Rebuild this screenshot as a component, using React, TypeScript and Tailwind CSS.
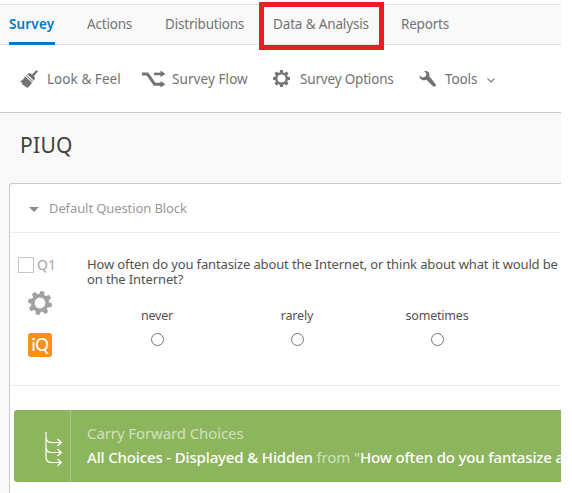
import React from "react";

const gearTeeth = [0, 45, 90, 135, 180, 225, 270, 315];

function Gear({ size, color, hole, turn = 0 }: { size: number; color: string; hole: number; turn?: number }) {
  return (
    <svg width={size} height={size} viewBox="-12 -12 24 24" className="shrink-0">
      <g transform={`rotate(${turn})`}>
        <circle r={(9 + hole) / 2} fill="none" stroke={color} strokeWidth={9 - hole} />
        {gearTeeth.map((a) => (
          <path key={a} d="M-2.7 -8 L-1.9 -12 H1.9 L2.7 -8 Z" fill={color} transform={`rotate(${a})`} />
        ))}
      </g>
    </svg>
  );
}

function Brush() {
  return (
    <svg width="18" height="18" viewBox="0 0 18 18" className="shrink-0" fill="#737373">
      <path d="M16.4 0 L17.9 1.4 L14 6 C15.4 7.8 15.2 9 13.9 10.5 L7 4 C8.8 2.6 10.3 3 12 4.4 Z" />
      <path d="M6.2 4.9 L13.1 11.3 L12.5 12 L5.6 5.6 Z" />
      <path d="M5 6.3 L12 12.8 C10.6 14.9 9.2 16.7 6.9 18 L5.8 16.4 L4.8 16.8 L4.1 15 L2.4 14.9 L2.2 12.9 L0 11.5 C2.7 10.5 3.9 8.6 5 6.3 Z" />
    </svg>
  );
}

function Flow() {
  return (
    <svg width="24" height="18" viewBox="0 0 24 18" className="shrink-0" fill="none" stroke="#737373" strokeWidth="2.6">
      <path d="M0 3.9 H5.4 L12.6 14.2 H20" strokeWidth="3" />
      <path d="M12 3.9 H20" />
      <path d="M18.5 0.6 L23.5 3.9 L18.5 7.1 Z M18.5 10.9 L23.5 14.2 L18.5 17.5 Z" fill="#737373" stroke="none" />
    </svg>
  );
}

function Wrench() {
  return (
    <svg width="18" height="18" viewBox="0 0 18 18" className="shrink-0">
      <path
        d="M5.1 1.2 C8.6 0.1 11.2 2.8 10.4 6.4 L16.4 13.7 C17.8 15.6 15.7 17.6 14 16.2 L7.5 9.8 C4 11 0.3 9.4 0.6 5.4 L3.4 7.6 L6.8 6.4 L7.3 3.2 Z"
        fill="#737373"
      />
    </svg>
  );
}

function CarryForward() {
  return (
    <svg width="18" height="36" viewBox="0 0 18 36" fill="none" stroke="#fff" strokeWidth="1.2">
      <path d="M1 1 V26 Q1 31.5 6.5 31.5 H16 M1 6 Q1 11.5 6.5 11.5 H16 M1 16 Q1 21.5 6.5 21.5 H16" />
      <path d="M12.5 8 L16.3 11.5 L12.5 15 M12.5 18 L16.3 21.5 L12.5 25 M12.5 28 L16.3 31.5 L12.5 35" />
    </svg>
  );
}

function Choice({ label }: { label: string }) {
  return (
    <div className="flex w-[140px] shrink-0 flex-col items-center">
      <span className="text-[12.5px] leading-[18px] tracking-[-0.2px]">{label}</span>
      <span className="mt-[8px] h-[13px] w-[13px] rounded-full border border-[#767676] bg-white" />
    </div>
  );
}

export default function App() {
  return (
    <div className="h-[493px] w-[572px] overflow-hidden bg-white font-['Noto_Sans','Open_Sans',sans-serif] whitespace-nowrap">
      <div className="flex h-full w-[561px] flex-col overflow-hidden bg-[#f9f9f9]">
        <div className="h-[4px] shrink-0 bg-white" />
        <nav className="flex h-[41px] shrink-0 gap-[32px] border-y border-[#e1e1e1] pl-[9px] text-[13.5px] leading-[39px] text-[#737373]">
          <div className="-mb-px h-[40px] w-[46px] border-b-[3px] border-[#007ac0] font-semibold tracking-[0.15px] text-[#007ac0]">Survey</div>
          <div className="w-[46px] tracking-[-0.2px]">Actions</div>
          <div className="w-[76px] tracking-[-0.2px]">Distributions</div>
          <div className="relative w-[96px] tracking-[-0.15px]">
            Data &amp; Analysis
            <div className="absolute -top-[3px] -left-[14px] h-[48px] w-[125px] border-[5px] border-[#ed1c24]" />
          </div>
          <div className="w-[48px] tracking-[-0.2px]">Reports</div>
        </nav>
        <div className="flex h-[68px] shrink-0 items-center border-b border-[#c9c9c9] bg-white pl-[20px] text-[13.5px] text-[#737373]">
          <Brush />
          <span className="ml-[9px] w-[95px] pt-[2px] tracking-[0.05px]">Look &amp; Feel</span>
          <Flow />
          <span className="ml-[6px] w-[101px] pt-[2px] tracking-[0.08px]">Survey Flow</span>
          <Gear size={17} color="#737373" hole={5.8} />
          <span className="ml-[10px] w-[119px] pt-[2px] tracking-[-0.18px]">Survey Options</span>
          <Wrench />
          <span className="ml-[8px] w-[42px] pt-[2px] tracking-[-0.1px]">Tools</span>
          <svg width="8" height="5" viewBox="0 0 8 5" className="mt-[3px]" fill="none" stroke="#737373" strokeWidth="1.1">
            <path d="M0.5 0.7 L4 4 L7.5 0.7" />
          </svg>
        </div>
        <h1 className="h-[70px] shrink-0 pl-[20px] text-[21px] leading-[65px] tracking-[0.3px] text-[#404040]">PIUQ</h1>
        <main className="ml-[9px] flex-1 rounded-tl-[3px] border-t border-l border-[#c9c9c9] bg-white">
          <div className="flex h-[49px] items-center border-b border-[#ececec] pl-[19px] text-[13px] text-[#999]">
            <span className="mt-[2px] h-0 w-0 border-x-[5px] border-t-[5px] border-x-transparent border-t-[#8c8c8c]" />
            <span className="ml-[10px] pt-[2px] tracking-[-0.1px]">Default Question Block</span>
          </div>
          <div className="flex h-[153px] border-b border-[#ececec]">
            <div className="flex w-[77px] shrink-0 flex-col pl-[8px]">
              <div className="mt-[22px] flex h-[20px] items-center">
                <span className="h-[16px] w-[16px] border border-[#c4c4c4]" />
                <span className="ml-[3px] pb-[2px] text-[14px] text-[#a6a6a6]">Q1</span>
              </div>
              <div className="mt-[16px] ml-[10px] h-[24px]">
                <Gear size={24} color="#a1a1a1" hole={5.4} turn={12} />
              </div>
              <div className="mt-[18px] ml-[10px] flex h-[24px] w-[24px] items-center justify-center rounded-[3px] bg-[#f7901e] font-['Lato',sans-serif] text-[17px] font-medium tracking-[-0.2px] text-white">iQ</div>
            </div>
            <div className="flex-1 text-[13px] text-[#525252]">
              <p className="mt-[24px] leading-[15px] tracking-[-0.13px]">
                How often do you fantasize about the Internet, or think about what it would be
                <br />
                on the Internet?
              </p>
              <div className="mt-[20px] flex">
                <Choice label="never" />
                <Choice label="rarely" />
                <Choice label="sometimes" />
              </div>
            </div>
          </div>
          <div className="mt-[24px] ml-[4px] flex h-[72px] rounded-l-[3px] bg-[#8db55d]">
            <div className="w-[57px] shrink-0 border-r border-[#a9c785] pt-[21px] pl-[31px]">
              <CarryForward />
            </div>
            <div className="pt-[11px] pl-[16px] text-[15px] leading-[24px] tracking-[-0.1px] text-[#d0e1bd]">
              <div>Carry Forward Choices</div>
              <div className="tracking-[-0.15px]">
                <span className="font-medium text-white">All Choices - Displayed &amp; Hidden</span> from "
                <span className="font-medium text-white">How often do you fantasize a</span>
              </div>
            </div>
          </div>
        </main>
      </div>
    </div>
  );
}
